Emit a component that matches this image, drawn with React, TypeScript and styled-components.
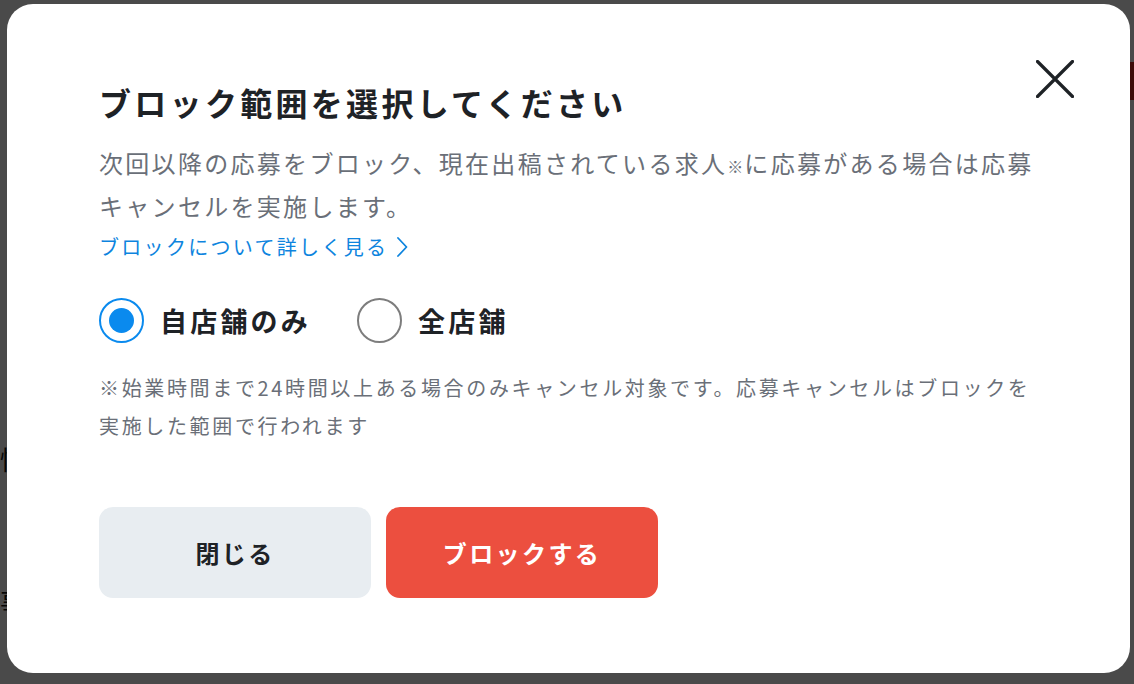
import React, { useState } from "react";
import styled, { createGlobalStyle } from "styled-components";

const GlobalStyle = createGlobalStyle`
  html, body {
    margin: 0;
    padding: 0;
    background: #ffffff;
  }
  body {
    font-family: "Noto Sans CJK JP", "Noto Sans", sans-serif;
    -webkit-font-smoothing: antialiased;
  }
  * { box-sizing: border-box; }
`;

const Page = styled.div`
  width: 1134px;
  height: 684px;
  background: #ffffff;
  display: flex;
  justify-content: space-between;
  overflow: hidden;
`;

const PageColumn = styled.div<{ $top: number }>`
  display: flex;
  flex-direction: column;
  padding-top: ${(p) => p.$top}px;
  gap: 104px;
  font-size: 26px;
  line-height: 38px;
  color: #111;
`;

const PageBadge = styled.div`
  margin-top: 62px;
  width: 8px;
  height: 38px;
  background: #d12a1f;
  border-radius: 2px 0 0 2px;
`;

const Overlay = styled.div`
  position: fixed;
  inset: 0;
  background: rgba(0, 0, 0, 0.71);
  display: flex;
  padding: 4px 4px 11px 7px;
`;

const Modal = styled.div`
  position: relative;
  flex: 1;
  background: #ffffff;
  border-radius: 26px;
  padding: 74px 80px 75px 92px;
  display: flex;
  flex-direction: column;
`;

const CloseButton = styled.button`
  position: absolute;
  top: 56px;
  right: 56px;
  width: 38px;
  height: 38px;
  padding: 0;
  border: none;
  background: none;
  cursor: pointer;
  display: flex;
`;

const Title = styled.h2`
  margin: 0;
  font-size: 32px;
  line-height: 48px;
  letter-spacing: 3.3px;
  font-weight: 700;
  color: #1e2226;
`;

const Description = styled.p`
  margin: 17px 0 0;
  font-size: 24px;
  line-height: 40px;
  letter-spacing: 2.3px;
  color: #6a6f78;
`;

const Mark = styled.span`
  font-size: 16px;
  letter-spacing: 1px;
`;

const HelpLink = styled.a`
  margin-top: 6px;
  align-self: flex-start;
  font-size: 20px;
  line-height: 30px;
  letter-spacing: 2.3px;
  color: #0d84de;
  text-decoration: none;
  display: inline-flex;
  align-items: center;
  gap: 7px;
`;

const RadioGroup = styled.div`
  margin-top: 36px;
  display: flex;
  align-items: center;
  gap: 46px;
  height: 46px;
`;

const RadioOption = styled.label`
  display: flex;
  align-items: center;
  gap: 16px;
  cursor: pointer;
`;

const RadioCircle = styled.span<{ $checked: boolean }>`
  width: 45px;
  height: 45px;
  border-radius: 50%;
  border: 2px solid ${(p) => (p.$checked ? "#0a8aee" : "#7d7d7d")};
  display: flex;
  align-items: center;
  justify-content: center;
  flex-shrink: 0;
  &::after {
    content: "";
    width: 25px;
    height: 25px;
    border-radius: 50%;
    background: #0a8aee;
    display: ${(p) => (p.$checked ? "block" : "none")};
  }
`;

const RadioLabel = styled.span`
  font-size: 27px;
  line-height: 40px;
  letter-spacing: 3.2px;
  font-weight: 700;
  color: #1e2226;
`;

const Note = styled.p`
  margin: 26px 0 0;
  font-size: 20px;
  line-height: 38px;
  letter-spacing: 2.65px;
  color: #6a6f78;
`;

const Actions = styled.div`
  margin-top: 62px;
  display: flex;
  gap: 15px;
`;

const ActionButton = styled.button<{ $variant: "secondary" | "danger" }>`
  width: 272px;
  height: 91px;
  border: none;
  border-radius: 14px;
  font-family: inherit;
  font-size: 24px;
  font-weight: 700;
  letter-spacing: 2.4px;
  cursor: pointer;
  background: ${(p) => (p.$variant === "danger" ? "#ec4f3f" : "#e8edf1")};
  color: ${(p) => (p.$variant === "danger" ? "#ffffff" : "#1e2226")};
`;

export default function App() {
  const [scope, setScope] = useState<"own" | "all">("own");
  return (
    <>
      <GlobalStyle />
      <Page>
        <PageColumn $top={440}>
          <span>性</span>
          <span>事</span>
        </PageColumn>
        <PageBadge />
      </Page>
      <Overlay>
        <Modal role="dialog" aria-modal="true">
          <CloseButton aria-label="閉じる">
            <svg width="38" height="38" viewBox="0 0 38 38" fill="none">
              <path
                d="M1.5 1.5 L36.5 36.5 M36.5 1.5 L1.5 36.5"
                stroke="#1e2226"
                strokeWidth="3.2"
                strokeLinecap="round"
              />
            </svg>
          </CloseButton>
          <Title>ブロック範囲を選択してください</Title>
          <Description>
            次回以降の応募をブロック、現在出稿されている求人<Mark>※</Mark>に応募がある場合は応募
            <br />
            キャンセルを実施します。
          </Description>
          <HelpLink href="#">
            ブロックについて詳しく見る
            <svg width="14" height="22" viewBox="0 0 14 22" fill="none">
              <path d="M3 2 L11.5 11 L3 20" stroke="#0d84de" strokeWidth="1.8" strokeLinejoin="round" strokeLinecap="round" />
            </svg>
          </HelpLink>
          <RadioGroup role="radiogroup">
            <RadioOption onClick={() => setScope("own")}>
              <RadioCircle $checked={scope === "own"} />
              <RadioLabel>自店舗のみ</RadioLabel>
            </RadioOption>
            <RadioOption onClick={() => setScope("all")}>
              <RadioCircle $checked={scope === "all"} />
              <RadioLabel>全店舗</RadioLabel>
            </RadioOption>
          </RadioGroup>
          <Note>
            ※始業時間まで24時間以上ある場合のみキャンセル対象です。応募キャンセルはブロックを
            <br />
            実施した範囲で行われます
          </Note>
          <Actions>
            <ActionButton $variant="secondary">閉じる</ActionButton>
            <ActionButton $variant="danger">ブロックする</ActionButton>
          </Actions>
        </Modal>
      </Overlay>
    </>
  );
}
